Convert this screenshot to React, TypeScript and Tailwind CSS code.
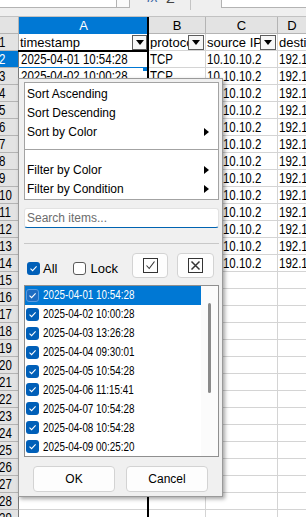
import React from 'react';

const dates = [
  '2025-04-01 10:54:28',
  '2025-04-02 10:00:28',
  '2025-04-03 13:26:28',
  '2025-04-04 09:30:01',
  '2025-04-05 10:54:28',
  '2025-04-06 11:15:41',
  '2025-04-07 10:54:28',
  '2025-04-08 10:54:28',
  '2025-04-09 00:25:20',
  '2025-04-10 08:12:44',
  '2025-04-11 10:54:28',
  '2025-04-12 14:02:17',
  '2025-04-13 10:54:28',
];

// condensed text (the sheet renders numbers in a narrow face)
function N({ children }: { children: React.ReactNode }) {
  return <span className="inline-block origin-left [transform:scaleX(0.82)] whitespace-nowrap">{children}</span>;
}

function FilterButton({ w }: { w: string }) {
  return (
    <div className={`${w} h-[15px] mr-px shrink-0 border border-[#5c5c5c] bg-[#f7f7f7] flex items-center justify-center`}>
      <div className="w-0 h-0 border-l-[4px] border-r-[4px] border-t-[5px] border-l-transparent border-r-transparent border-t-black" />
    </div>
  );
}

function Toolbar() {
  return (
    <div className="h-[17px] bg-[#efefef] border-b border-[#c2c2c2] flex items-start">
      <div className="w-[117px] h-[8px] bg-white border-r border-b border-[#b3b3b3]" />
      <div className="w-[13px] h-[8px] bg-[#fafafa] border-r border-b border-[#b3b3b3]" />
      <div className="ml-[17px] h-[5px] overflow-hidden">
        <div className="-mt-[11px] italic text-[14px] leading-[16px] text-[#3f6aa8]">fx</div>
      </div>
      <div className="ml-[8px] h-[6px] overflow-hidden">
        <div className="-mt-[10px] text-[14px] leading-[16px] text-[#444]">Σ</div>
      </div>
      <div className="ml-[15px] w-px h-[10px] bg-[#c4c4c4]" />
      <div className="ml-[30px] flex-1 h-[8px] bg-white border-l border-b border-[#b3b3b3] overflow-hidden pl-[4px]">
        <div className="-mt-[13px] text-[14px] leading-[16px] whitespace-nowrap text-black">2025-04-01 10:54:28</div>
      </div>
    </div>
  );
}

function HeaderRow() {
  return (
    <div className="flex h-[17px] text-[13px] leading-none">
      <div className="w-[19px] shrink-0 bg-[#e3e3e3] border-r border-b border-[#b4b4b4]" />
      <div className="w-[130px] shrink-0 bg-[#0078d4] text-white border-r border-b border-[#0078d4] flex items-center justify-center">A</div>
      <div className="w-[57px] shrink-0 bg-[#e3e3e3] border-r border-b border-[#b4b4b4] flex items-center justify-center">B</div>
      <div className="w-[72px] shrink-0 bg-[#e3e3e3] border-r border-b border-[#b4b4b4] flex items-center justify-center">C</div>
      <div className="flex-1 bg-[#e3e3e3] border-b border-[#b4b4b4] flex items-center justify-center">D</div>
    </div>
  );
}

function GridRow({ n }: { n: number }) {
  const sel = n === 2;
  const d = n >= 2 && n <= 14 ? dates[n - 2] : null;

  if (n === 1) {
    return (
      <div className="flex h-[17px] text-[13px] leading-none text-black">
        <div className="w-[19px] shrink-0 border-r border-b border-[#b4b4b4] overflow-hidden flex items-center bg-[#e3e3e3] text-[14px]">
          <span className="-ml-px"><N>1</N></span>
        </div>
        <div className="w-[130px] shrink-0 border-r border-b border-[#d4d4d4] pl-px flex items-center justify-between">
          <span>timestamp</span>
          <FilterButton w="w-[15px]" />
        </div>
        <div className="w-[57px] shrink-0 border-r border-b border-[#d4d4d4] pl-px flex items-center justify-between overflow-hidden">
          <span className="whitespace-nowrap overflow-hidden">protocol</span>
          <FilterButton w="w-[16px]" />
        </div>
        <div className="w-[72px] shrink-0 border-r border-b border-[#d4d4d4] pl-px flex items-center justify-between overflow-hidden">
          <span className="whitespace-nowrap overflow-hidden">source IP</span>
          <FilterButton w="w-[16px]" />
        </div>
        <div className="flex-1 border-b border-[#d4d4d4] pl-px flex items-center overflow-hidden whitespace-nowrap">destination IP</div>
      </div>
    );
  }

  return (
    <div className="flex h-[17px] text-[14px] leading-none text-black">
      <div
        className={`w-[19px] shrink-0 border-r border-b border-r-[#7a7a7a] border-b-[#b4b4b4] overflow-hidden flex items-center ${sel ? 'bg-[#0078d4] text-white' : 'bg-[#e3e3e3] text-black'}`}
      >
        <span className="-ml-px"><N>{n}</N></span>
      </div>
      <div className="w-[130px] shrink-0 border-r border-b border-[#d4d4d4] pl-[2px] flex items-center overflow-hidden">{d && <N>{d}</N>}</div>
      <div className="w-[57px] shrink-0 border-r border-b border-[#d4d4d4] pl-px flex items-center overflow-hidden">{d && <N>TCP</N>}</div>
      <div className="w-[72px] shrink-0 border-r border-b border-[#d4d4d4] pl-px flex items-center overflow-hidden">{d && <N>10.10.10.2</N>}</div>
      <div className="flex-1 border-b border-[#d4d4d4] pl-px flex items-center overflow-hidden">{d && <N>192.168.1.10</N>}</div>
    </div>
  );
}

function Arrow() {
  return <div className="w-0 h-0 border-t-[4px] border-b-[4px] border-l-[5px] border-t-transparent border-b-transparent border-l-black" />;
}

function MenuItem({ label, sub }: { label: string; sub?: boolean }) {
  return (
    <div className="h-[19px] pl-[2px] pr-[9px] flex items-center justify-between">
      <span>{label}</span>
      {sub && <Arrow />}
    </div>
  );
}

function Check({ selected }: { selected?: boolean }) {
  return (
    <div
      className={`w-[13px] h-[13px] shrink-0 rounded-[3px] flex items-center justify-center ${selected ? 'bg-[#1d6cc2] border border-[#5b9be0]' : 'bg-[#005fb8]'}`}
    >
      <svg width="9" height="9" viewBox="0 0 9 9">
        <polyline points="1.5,4.6 3.6,6.6 7.6,2.4" fill="none" stroke="white" strokeWidth="1.1" />
      </svg>
    </div>
  );
}

function Dialog() {
  return (
    <div className="absolute left-[18px] top-[78px] w-[205px] h-[419px] bg-[#f0f0f0] border border-[#9a9a9a] shadow-[2px_2px_4px_rgba(0,0,0,0.35)] flex flex-col pl-[5px] pr-[3px] pt-[3px] font-['Liberation_Sans',sans-serif] text-[12px] leading-none text-black">
      <div className="h-[118px] shrink-0 bg-white border border-[#a3a3a3] pt-px flex flex-col">
        <MenuItem label="Sort Ascending" />
        <MenuItem label="Sort Descending" />
        <MenuItem label="Sort by Color" sub />
        <div className="h-[19px] pt-[8px]">
          <div className="h-px bg-[#a3a3a3]" />
        </div>
        <MenuItem label="Filter by Color" sub />
        <MenuItem label="Filter by Condition" sub />
      </div>

      <div className="mt-[8px] h-[20px] shrink-0 bg-white border border-[#e2e2e2] border-b-[#0063b1] rounded-[3px] pl-[2px] flex items-center text-[#6d6d6d]">
        Search items...
      </div>

      <div className="mt-[15px] h-px shrink-0 bg-[#c8c8c8]" />

      <div className="mt-[9px] h-[25px] shrink-0 flex items-center">
        <div className="mt-[5px] ml-[3px] flex items-center text-[13px]">
          <Check />
          <span className="ml-[3px]">All</span>
          <div className="ml-[16px] w-[13px] h-[13px] rounded-[3px] border border-[#5a5a5a] bg-white" />
          <span className="ml-[4px]">Lock</span>
        </div>
        <div className="ml-auto mr-[5px] flex gap-[9px]">
          <div className="w-[36px] h-[25px] bg-[#fdfdfd] border border-[#d3d3d3] rounded-[4px] flex items-center justify-center">
            <svg width="15" height="15" viewBox="0 0 15 15">
              <rect x="0.5" y="0.5" width="14" height="14" fill="none" stroke="#333" />
              <polyline points="3.5,7.5 6.2,10.5 11.5,3.5" fill="none" stroke="#333" strokeWidth="1.1" />
            </svg>
          </div>
          <div className="w-[37px] h-[25px] bg-[#fdfdfd] border border-[#d3d3d3] rounded-[4px] flex items-center justify-center">
            <svg width="15" height="15" viewBox="0 0 15 15">
              <rect x="0.5" y="0.5" width="14" height="14" fill="none" stroke="#333" />
              <path d="M3.5 3.5 L11.5 11.5 M11.5 3.5 L3.5 11.5" stroke="#333" strokeWidth="1.5" />
            </svg>
          </div>
        </div>
      </div>

      <div className="mt-[7px] h-[172px] shrink-0 bg-white border border-[#8f8f8f] flex">
        <div className="w-[176px] shrink-0 flex flex-col">
          {dates.slice(0, 9).map((d, i) => (
            <div
              key={d + i}
              className={`h-[19px] pl-px flex items-center gap-[4px] ${i === 0 ? 'bg-[#0078d4] text-white' : 'text-black'}`}
            >
              <Check selected={i === 0} />
              <span className="text-[12px]"><N>{d}</N></span>
            </div>
          ))}
        </div>
        <div className="flex-1 pt-[17px] flex justify-center bg-[#fbfbfb]">
          <div className="w-[3px] h-[90px] rounded-full bg-[#8a8a8a]" />
        </div>
      </div>

      <div className="mt-[9px] h-[26px] shrink-0 flex justify-center gap-[11px] pr-[2px]">
        <div className="w-[82px] bg-[#fdfdfd] border border-[#d3d3d3] rounded-[4px] flex items-center justify-center">OK</div>
        <div className="w-[82px] bg-[#fdfdfd] border border-[#d3d3d3] rounded-[4px] flex items-center justify-center">Cancel</div>
      </div>
    </div>
  );
}

export default function App() {
  return (
    <div className="relative w-[306px] h-[517px] overflow-hidden bg-white font-['Liberation_Sans',sans-serif]">
      <Toolbar />
      <HeaderRow />
      {Array.from({ length: 29 }, (_, i) => i + 1).map(n => (
        <GridRow key={n} n={n} />
      ))}

      {/* freeze line + cell cursor */}
      <div className="absolute left-[147px] top-[17px] bottom-0 w-[2px] bg-black" />
      <div className="absolute left-[18px] top-[50px] w-[130px] h-[2px] bg-black" />
      <div className="absolute left-[19px] top-[67px] w-[127px] h-px bg-[#0078d4]" />
      <div className="absolute left-[143px] top-[67px] w-[4px] h-[4px] bg-[#0078d4]" />

      <Dialog />
    </div>
  );
}
